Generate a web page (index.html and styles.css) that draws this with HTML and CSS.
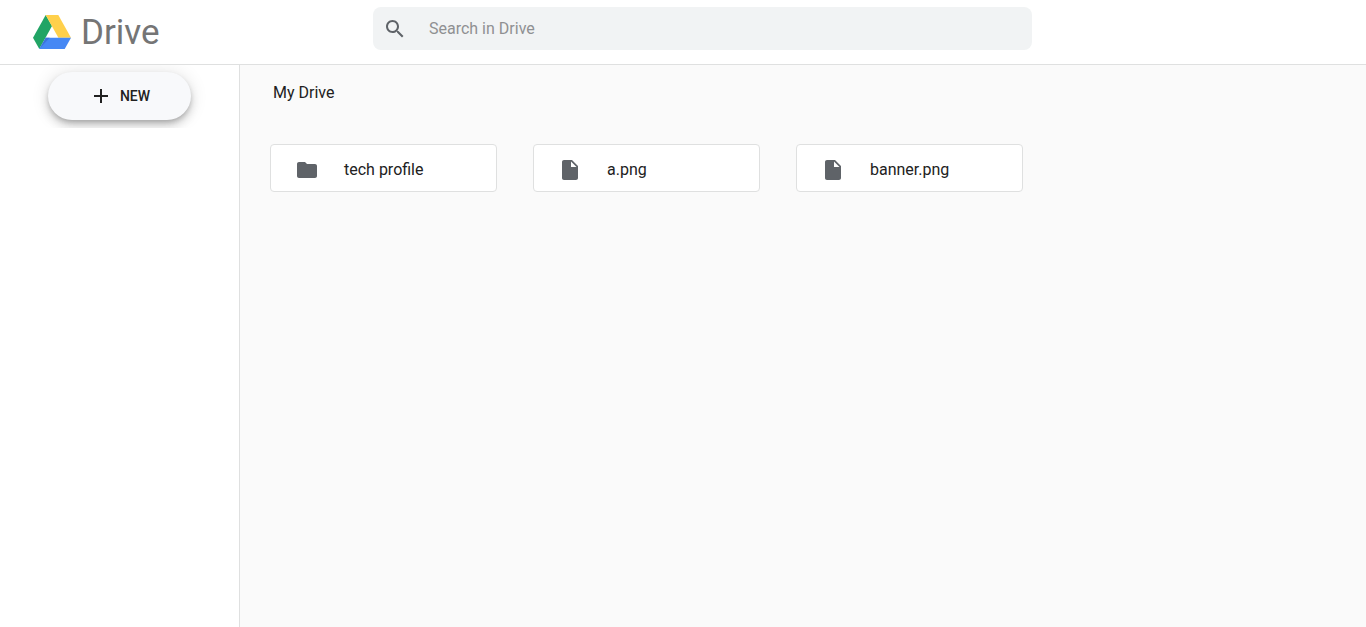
FILE: index.html
```html
<!DOCTYPE html>
<html lang="en">
<head>
  <meta charset="utf-8">
  <meta name="viewport" content="width=device-width, initial-scale=1">
  <title>Drive</title>
  <link rel="stylesheet" href="styles.css">
</head>
<body>
  <header class="header">
    <a class="brand" href="#">
      <svg class="brand-mark" viewBox="0 0 38 34" aria-hidden="true">
        <path fill="#21a465" d="M12.7 0 19 11 6.3 34 0 22.7z"/>
        <path fill="#ffd04b" d="M12.7 0h12.6L38 22.7H25.4z"/>
        <path fill="#4688f4" d="M12.7 22.7H38L31.7 34H6.3z"/>
        <path fill="#3c74dc" d="M12.7 22.7h4L6.3 34z"/>
      </svg>
      <span class="brand-name">Drive</span>
    </a>
    <form class="search" role="search">
      <svg class="icon" viewBox="0 0 24 24" aria-hidden="true"><path d="M15.5 14h-.79l-.28-.27C15.41 12.59 16 11.11 16 9.5 16 5.91 13.09 3 9.5 3S3 5.91 3 9.5 5.91 16 9.5 16c1.61 0 3.09-.59 4.23-1.57l.27.28v.79l5 4.99L20.49 19l-4.99-5zm-6 0C7.01 14 5 11.99 5 9.5S7.01 5 9.5 5 14 7.01 14 9.5 11.99 14 9.5 14z"/></svg>
      <input class="search-input" type="text" placeholder="Search in Drive" aria-label="Search in Drive">
    </form>
  </header>
  <div class="layout">
    <aside class="sidebar">
      <div class="sidebar-action">
        <button class="new-button" type="button">
          <svg class="icon-add" viewBox="0 0 24 24" aria-hidden="true"><path d="M19 13h-6v6h-2v-6H5v-2h6V5h2v6h6v2z"/></svg>
          NEW
        </button>
      </div>
    </aside>
    <main class="content">
      <h1 class="title">My Drive</h1>
      <div class="items">
        <a class="item" href="#">
          <svg class="icon" viewBox="0 0 24 24" aria-hidden="true"><path d="M10 4H4c-1.1 0-1.99.9-1.99 2L2 18c0 1.1.9 2 2 2h16c1.1 0 2-.9 2-2V8c0-1.1-.9-2-2-2h-8l-2-2z"/></svg>
          <span>tech profile</span>
        </a>
        <a class="item" href="#">
          <svg class="icon" viewBox="0 0 24 24" aria-hidden="true"><path d="M6 2c-1.1 0-1.99.9-1.99 2L4 20c0 1.1.89 2 1.99 2H18c1.1 0 2-.9 2-2V8l-6-6H6zm7 7V3.5L18.5 9H13z"/></svg>
          <span>a.png</span>
        </a>
        <a class="item" href="#">
          <svg class="icon" viewBox="0 0 24 24" aria-hidden="true"><path d="M6 2c-1.1 0-1.99.9-1.99 2L4 20c0 1.1.89 2 1.99 2H18c1.1 0 2-.9 2-2V8l-6-6H6zm7 7V3.5L18.5 9H13z"/></svg>
          <span>banner.png</span>
        </a>
      </div>
    </main>
  </div>
</body>
</html>
```
FILE: styles.css
```css
*,
*::before,
*::after {
  box-sizing: border-box;
}

body {
  display: flex;
  flex-direction: column;
  min-height: 100vh;
  margin: 0;
  font-family: Roboto, "Liberation Sans", sans-serif;
  font-size: 16px;
  line-height: 24px;
  color: #212121;
  background: #fff;
}

.header {
  display: grid;
  grid-template-columns: 340px 1fr 301px;
  align-items: start;
  padding: 7px 33px;
  min-height: 65px;
  border-bottom: 1px solid #dfe0e0;
}

.brand {
  display: flex;
  align-items: flex-start;
  gap: 10px;
  padding-top: 8px;
  color: #757575;
  text-decoration: none;
}

.brand-mark {
  width: 38px;
  height: 34px;
}

.brand-name {
  font-size: 35px;
  line-height: 36px;
}

.search {
  display: flex;
  align-items: center;
  gap: 22px;
  height: 43px;
  padding: 0 10px;
  background: #f1f3f4;
  border-radius: 8px;
}

.search-input {
  flex: 1;
  min-width: 0;
  padding: 0;
  border: 0;
  outline: 0;
  background: none;
  font: inherit;
  color: inherit;
}

.search-input::placeholder {
  color: #8f9092;
  opacity: 1;
}

.icon {
  flex: none;
  width: 24px;
  height: 24px;
  fill: #5f6368;
}

.layout {
  display: flex;
  flex: 1;
}

.sidebar {
  flex: none;
  width: 240px;
  border-right: 1px solid #dfe0e0;
}

.sidebar-action {
  padding: 7px 48px 8px;
  overflow: hidden;
}

.new-button {
  display: flex;
  align-items: center;
  justify-content: center;
  gap: 7px;
  width: 100%;
  height: 48px;
  padding: 0 16px;
  border: 0;
  border-radius: 24px;
  background: #f8f9fb;
  box-shadow: 0 3px 5px -1px rgba(0, 0, 0, 0.2), 0 6px 10px 0 rgba(0, 0, 0, 0.14), 0 1px 18px 0 rgba(0, 0, 0, 0.12);
  color: #212121;
  font: 500 14px/24px Roboto, "Liberation Sans", sans-serif;
  cursor: pointer;
}

.icon-add {
  width: 24px;
  height: 24px;
  fill: #212121;
}

.content {
  flex: 1;
  min-width: 0;
  padding: 16px 30px;
  background: #fafafa;
}

.title {
  margin: 0 0 39px;
  padding-left: 3px;
  font-size: 16px;
  font-weight: 400;
  line-height: 24px;
}

.items {
  display: flex;
  flex-wrap: wrap;
  gap: 36px;
}

.item {
  display: flex;
  align-items: center;
  gap: 25px;
  width: 227px;
  padding: 13px 24px 9px;
  border: 1px solid #dfe0e0;
  border-radius: 4px;
  background: #fff;
  color: inherit;
  text-decoration: none;
}
```
